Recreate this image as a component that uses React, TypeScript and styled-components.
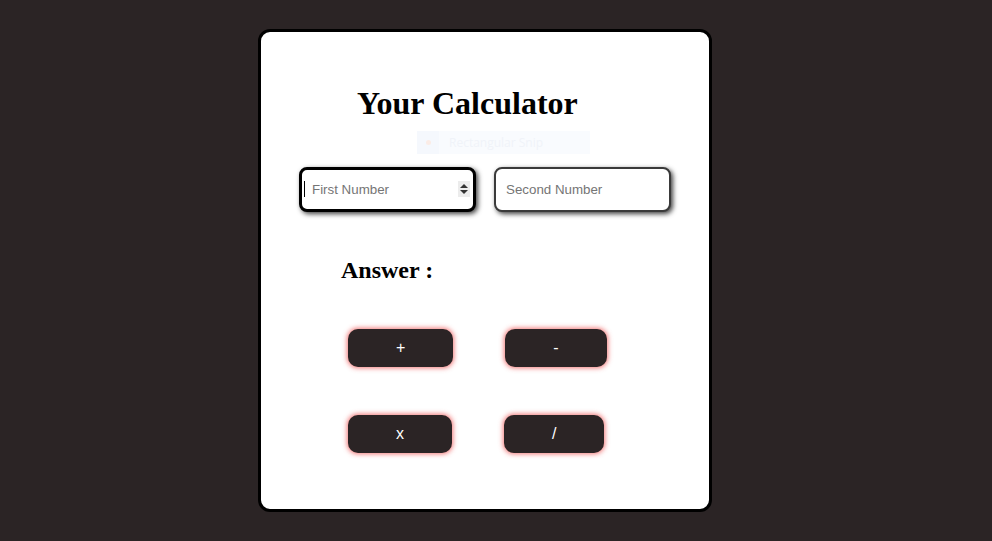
import React from "react";
import styled, { createGlobalStyle } from "styled-components";

const Global = createGlobalStyle`
  html, body { margin: 0; padding: 0; background: #2b2425; }
  body { font-family: "Liberation Serif", "Times New Roman", serif; }
`;

const Page = styled.div`
  min-height: 541px;
  box-sizing: border-box;
  padding: 29px 0 0 258px;
  display: flex;
  align-items: flex-start;
`;

const Card = styled.div`
  position: relative;
  box-sizing: border-box;
  width: 454px;
  height: 483px;
  background: #fff;
  border: 3px solid #000;
  border-radius: 12px;
  display: flex;
  flex-direction: column;
  align-items: flex-start;
`;

const Title = styled.h1`
  margin: 53px 0 0 96px;
  font-family: "Liberation Serif", "Times New Roman", serif;
  font-size: 32px;
  font-weight: bold;
  line-height: normal;
  color: #000;
`;

const Snip = styled.div`
  position: absolute;
  left: 156px;
  top: 99px;
  width: 173px;
  height: 23px;
  background: #f9fbfe;
  display: flex;
  align-items: center;
  font-family: "Open Sans", "Liberation Sans", sans-serif;
  font-size: 12px;
  color: #f0f3f9;
`;

const SnipIcon = styled.div`
  width: 22px;
  height: 23px;
  background: #f5f8fd;
  display: flex;
  align-items: center;
  justify-content: center;
  margin-right: 10px;
  &::after {
    content: "";
    width: 5px;
    height: 5px;
    border-radius: 50%;
    background: #fbece6;
  }
`;

const InputRow = styled.div`
  display: flex;
  gap: 18px;
  margin: 45px 0 0 38px;
`;

const Field = styled.div`
  position: relative;
`;

const Input = styled.input<{ $active?: boolean }>`
  box-sizing: border-box;
  width: 177px;
  height: 45px;
  padding: 0 0 0 10px;
  border: ${(p) => (p.$active ? "3px solid #000" : "2px solid #3a3a3a")};
  border-radius: 8px;
  background: #fff;
  box-shadow: 2px 2px 5px rgba(0, 0, 0, 0.75);
  font-family: "Liberation Sans", Arial, sans-serif;
  font-size: 13.33px;
  color: #000;
  outline: none;
  &::placeholder { color: #757575; }
  &::-webkit-inner-spin-button,
  &::-webkit-outer-spin-button { -webkit-appearance: none; margin: 0; }
`;

const Caret = styled.span`
  position: absolute;
  left: 5px;
  top: 14px;
  width: 1px;
  height: 16px;
  background: #000;
`;

const Spinner = styled.span`
  position: absolute;
  right: 6px;
  top: 14px;
  width: 12px;
  height: 16px;
  background: #ececec;
  display: flex;
  align-items: center;
  justify-content: center;
`;

const Answer = styled.h2`
  margin: 45px 0 0 80px;
  font-family: "Liberation Serif", "Times New Roman", serif;
  font-size: 24px;
  font-weight: bold;
  line-height: normal;
  color: #000;
`;

const ButtonRow = styled.div<{ $top: number }>`
  display: flex;
  gap: 52px;
  margin: ${(p) => p.$top}px 0 0 87px;
`;

const OpButton = styled.button`
  box-sizing: border-box;
  height: 38px;
  padding: 0 48px;
  border: none;
  border-radius: 10px;
  background: #2b2425;
  color: #fff;
  font-family: "Liberation Sans", Arial, sans-serif;
  font-size: 16px;
  font-weight: normal;
  box-shadow: 0 0 5px 1px rgba(235, 60, 60, 0.7);
  cursor: pointer;
`;

export default function App() {
  return (
    <>
      <Global />
      <Page>
        <Card>
          <Title>Your Calculator</Title>
          <Snip>
            <SnipIcon />
            Rectangular Snip
          </Snip>
          <InputRow>
            <Field>
              <Input type="number" placeholder="First Number" $active />
              <Caret />
              <Spinner>
                <svg width="8" height="12" viewBox="0 0 8 12">
                  <path d="M0 5 L4 1 L8 5 Z" fill="#333" />
                  <path d="M0 7 L4 11 L8 7 Z" fill="#333" />
                </svg>
              </Spinner>
            </Field>
            <Field>
              <Input type="number" placeholder="Second Number" />
            </Field>
          </InputRow>
          <Answer>Answer :</Answer>
          <ButtonRow $top={45}>
            <OpButton>+</OpButton>
            <OpButton>-</OpButton>
          </ButtonRow>
          <ButtonRow $top={48}>
            <OpButton>x</OpButton>
            <OpButton>/</OpButton>
          </ButtonRow>
        </Card>
      </Page>
    </>
  );
}
